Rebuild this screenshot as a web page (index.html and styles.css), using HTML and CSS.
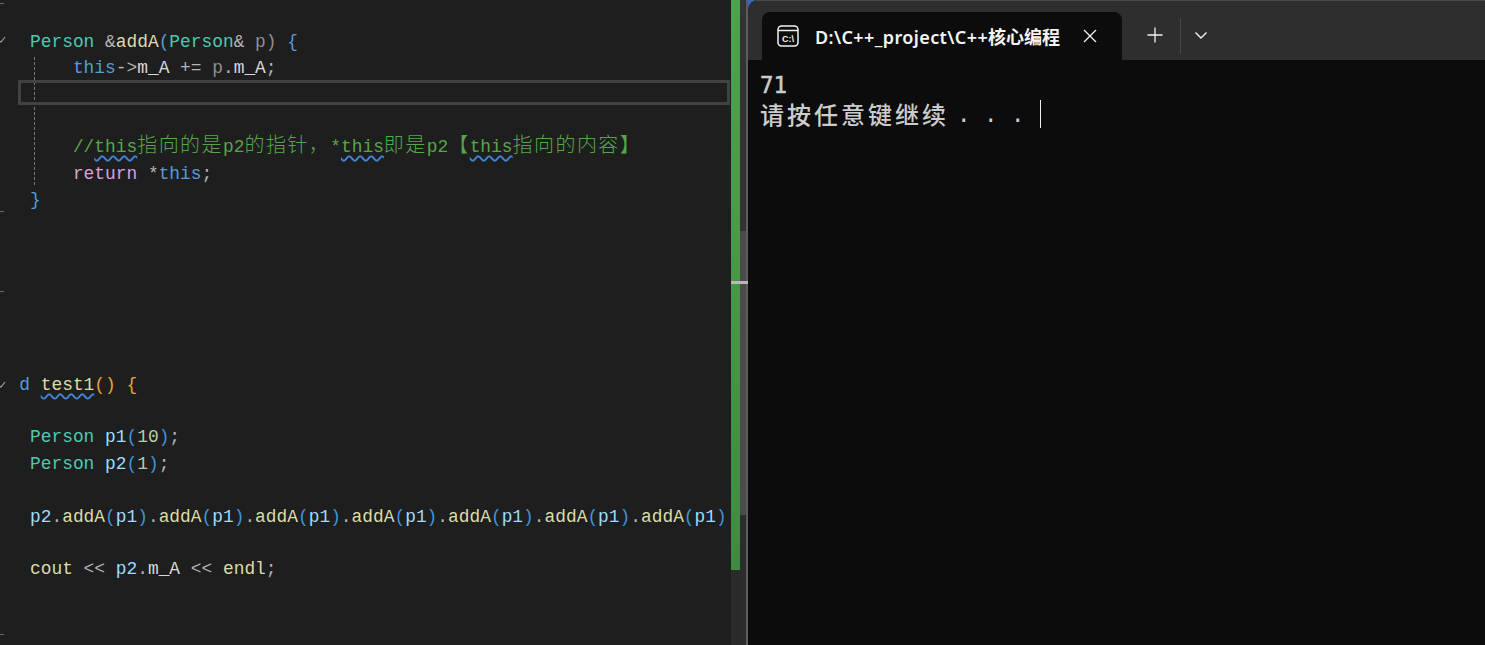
FILE: index.html
```html
<!DOCTYPE html>
<html lang="zh">
<head>
<meta charset="utf-8">
<title>C++ editor and console</title>
<link rel="stylesheet" href="styles.css">
</head>
<body>
<main class="desktop">
  <section class="editor">
    <span class="margin-tick tick-a"></span>
    <span class="margin-tick tick-b"></span>
    <span class="margin-tick tick-c"></span>
    <span class="margin-tick tick-d"></span>
    <svg class="fold fold-a" width="8" height="8" viewBox="0 0 8 8"><path d="M0 6 L2 7 L6 2" fill="none" stroke="#a0a0a0" stroke-width="1.2"/></svg>
    <svg class="fold fold-b" width="8" height="8" viewBox="0 0 8 8"><path d="M0 6 L2 7 L6 2" fill="none" stroke="#a0a0a0" stroke-width="1.2"/></svg>
    <div class="guide"></div>
    <div class="current-line"></div>
    <div class="code">
      <div class="line"> <span class="type">Person</span> <span class="op">&amp;</span><span class="fn">addA</span><span class="kw">(</span><span class="type">Person</span><span class="op">&amp;</span> <span class="dim">p)</span> <span class="kw">{</span></div>
      <div class="line">     <span class="kw">this</span><span class="op">-&gt;</span><span class="mem">m_A</span> <span class="op">+=</span> <span class="dim">p</span><span class="op">.</span><span class="mem">m_A</span><span class="op">;</span></div>
      <div class="line"></div>
      <div class="line"></div>
      <div class="line">     <span class="cm">//</span><span class="cm squig">this</span><span class="cm cjk">指向的是</span><span class="cm">p2</span><span class="cm cjk">的指针，</span><span class="cm">*</span><span class="cm squig">this</span><span class="cm cjk">即是</span><span class="cm">p2</span><span class="cm cjk">【</span><span class="cm squig">this</span><span class="cm cjk">指向的内容】</span></div>
      <div class="line">     <span class="ret">return</span> <span class="op">*</span><span class="kw">this</span><span class="op">;</span></div>
      <div class="line"> <span class="kw">}</span></div>
      <div class="line"></div>
      <div class="line"></div>
      <div class="line"></div>
      <div class="line"></div>
      <div class="line"></div>
      <div class="line"></div>
      <div class="line"><span class="kw">d</span> <span class="fn squig">test1</span><span class="gold">()</span> <span class="gold">{</span></div>
      <div class="line"></div>
      <div class="line"> <span class="type">Person</span> <span class="var">p1</span><span class="paren">(</span><span class="num">10</span><span class="paren">)</span><span class="op">;</span></div>
      <div class="line"> <span class="type">Person</span> <span class="var">p2</span><span class="paren">(</span><span class="num">1</span><span class="paren">)</span><span class="op">;</span></div>
      <div class="line"></div>
      <div class="line"> <span class="var">p2</span><span class="op">.</span><span class="fn">addA</span><span class="paren">(</span><span class="var">p1</span><span class="paren">)</span><span class="op">.</span><span class="fn">addA</span><span class="paren">(</span><span class="var">p1</span><span class="paren">)</span><span class="op">.</span><span class="fn">addA</span><span class="paren">(</span><span class="var">p1</span><span class="paren">)</span><span class="op">.</span><span class="fn">addA</span><span class="paren">(</span><span class="var">p1</span><span class="paren">)</span><span class="op">.</span><span class="fn">addA</span><span class="paren">(</span><span class="var">p1</span><span class="paren">)</span><span class="op">.</span><span class="fn">addA</span><span class="paren">(</span><span class="var">p1</span><span class="paren">)</span><span class="op">.</span><span class="fn">addA</span><span class="paren">(</span><span class="var">p1</span><span class="paren">)</span></div>
      <div class="line"></div>
      <div class="line"> <span class="fn">cout</span> <span class="op">&lt;&lt;</span> <span class="var">p2</span><span class="op">.</span><span class="mem">m_A</span> <span class="op">&lt;&lt;</span> <span class="fn">endl</span><span class="op">;</span></div>
    </div>
  </section>

  <aside class="scrollbar">
    <div class="track">
      <div class="thumb"></div>
    </div>
    <div class="rail"></div>
    <div class="split-mark"></div>
  </aside>

  <section class="terminal">
    <header class="tabbar">
      <div class="tab">
        <svg class="tab-icon" width="22" height="22" viewBox="0 0 22 22">
          <rect x="1" y="1" width="20" height="20" rx="3.5" fill="none" stroke="#f2f2f2" stroke-width="1.5"/>
          <path d="M1 5.5 H21" stroke="#f2f2f2" stroke-width="1.5"/>
          <text class="icon-text" x="11" y="16.5" text-anchor="middle">C:\</text>
        </svg>
        <span class="tab-title"><span class="tab-latin">D:\C++_project\C++</span>核心编程</span>
        <svg class="tab-close" width="14" height="14" viewBox="0 0 14 14"><path d="M1 1 L13 13 M13 1 L1 13" stroke="#f2f2f2" stroke-width="1.3"/></svg>
      </div>
      <svg class="new-tab" width="16" height="16" viewBox="0 0 16 16"><path d="M8 0.5 V15.5 M0.5 8 H15.5" stroke="#f2f2f2" stroke-width="1.3"/></svg>
      <div class="tab-sep"></div>
      <svg class="tab-menu" width="14" height="9" viewBox="0 0 14 9"><path d="M1.5 1.5 L7 7 L12.500 1.500" fill="none" stroke="#f2f2f2" stroke-width="1.4"/></svg>
    </header>
    <div class="console">
      <div class="out-line out-num">71</div>
      <div class="out-line"><span class="out-cjk">请按任意键继续</span><span class="out-dots">. . .</span><span class="cursor"></span></div>
    </div>
  </section>
</main>
</body>
</html>
```
FILE: styles.css
```css
* { box-sizing: border-box; }
html, body { margin: 0; height: 100%; overflow: hidden; background: #1e1e1e; }

.desktop { display: flex; width: 1485px; height: 645px; background: #2f6fb0; }

/* editor */
.editor { position: relative; width: 731px; height: 645px; background: #1e1e1e; overflow: hidden; flex: none; }
.code { padding: 28.6px 0 0 19.3px; font-family: "Liberation Mono", "Noto Sans CJK SC", monospace; font-size: 17.87px; color: #dcdcdc; }
.line { height: 26.4px; line-height: 26.4px; white-space: pre; }
.cjk { font-family: "Noto Sans CJK SC", sans-serif; font-size: 20px; line-height: 0; letter-spacing: 1.45px; font-weight: 300; }

.type { color: #4ec9b0; }
.fn { color: #dcdcaa; }
.kw { color: #569cd6; }
.op { color: #b4b4b4; }
.dim { color: #8f8f8f; }
.mem { color: #dadada; }
.cm { color: #57a64a; }
.ret { color: #d8a0df; }
.var { color: #9cdcfe; }
.num { color: #b5cea8; }
.paren { color: #3a96dd; }
.gold { color: #e8a33d; }
.squig { text-decoration: underline wavy #3f86d8 1.6px; text-underline-offset: 3px; }

.current-line { position: absolute; left: 18px; top: 80px; width: 712px; height: 25px; border: 3px solid #424242; }
.guide { position: absolute; left: 34px; top: 57px; height: 128px; border-left: 1px dashed #7a7a7a; }
.margin-tick { position: absolute; left: 0; width: 4px; height: 1px; background: #6a6a6a; }
.tick-a { top: 3px; }
.tick-b { top: 211px; }
.tick-c { top: 291px; }
.tick-d { top: 634px; }
.fold { position: absolute; left: -1px; }
.fold-a { top: 35px; }
.fold-b { top: 380px; }

/* splitter */
.scrollbar { position: relative; display: flex; width: 17px; height: 645px; flex: none; background: #2a2a2a; }
.track { width: 9px; height: 645px; background: #2b2b2b; }
.thumb { height: 570px; background: linear-gradient(#4da24d, #4a9a4a 40%, #3f8a3f); }
.rail { flex: 1; background: linear-gradient(#333 0, #333 231px, #4b4b4b 231px, #4b4b4b 515px, #2c2c2c 515px); border-right: 2px solid #5c5c5c; }
.split-mark { position: absolute; left: 0; right: 0; top: 281px; height: 3px; background: #b8b8b8; }

/* terminal */
.terminal { flex: 1; min-width: 0; height: 645px; background: #0c0c0c; display: flex; flex-direction: column; border-top-left-radius: 10px; overflow: hidden; }
.tabbar { display: flex; align-items: center; height: 60px; flex: none; background: #2e2e2e; border-top: 1px solid #4a4a4a; padding: 11px 0 0 14px; }
.tab { display: flex; align-items: center; width: 360px; height: 48px; background: #0c0c0c; border-radius: 8px 8px 0 0; padding-left: 15px; }
.tab-icon { flex: none; }
.icon-text { font-family: "Liberation Sans", sans-serif; font-size: 9px; font-weight: 700; fill: #f2f2f2; }
.tab-title { margin-left: 16px; width: 245px; flex: none; font-family: "Noto Sans", "Noto Sans CJK SC", sans-serif; font-size: 18px; font-weight: 600; color: #f4f4f4; white-space: nowrap; }
.tab-latin { letter-spacing: 0.39px; }
.tab-close { margin-left: 23px; flex: none; }
.new-tab { margin: -2px 0 0 25px; flex: none; }
.tab-sep { width: 1px; height: 36px; margin: -1px 0 0 17px; background: #474747; }
.tab-menu { margin: -2px 0 0 13px; flex: none; }

.console { padding: 11px 0 0 12px; font-family: "DejaVu Sans Mono", "Noto Sans CJK SC", monospace; font-size: 22.4px; color: #cccccc; }
.out-line { display: flex; align-items: center; height: 28.5px; white-space: pre; }
.out-num { -webkit-text-stroke: 0.5px #cccccc; }
.out-cjk { font-family: "Noto Sans CJK SC", sans-serif; font-size: 24px; letter-spacing: 3px; font-weight: 500; }
.out-dots { margin-left: 8px; }
.cursor { width: 1px; height: 28px; margin-left: 15.5px; background: #f0f0f0; }
```
